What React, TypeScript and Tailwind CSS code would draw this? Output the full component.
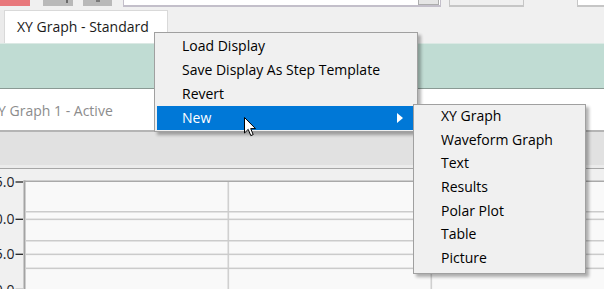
const mainItems = ["Load Display", "Save Display As Step Template", "Revert"];
const subItems = ["XY Graph", "Waveform Graph", "Text", "Results", "Polar Plot", "Table", "Picture"];

const Toolbar = () => (
  <div className="flex h-[7px]">
    <div className="h-[6px] w-[30px] bg-[#e8787c]" />
    <div className="ml-[13px] flex h-[6px] w-[30px] justify-end bg-[#b9b9b9] pr-[5px]">
      <div className="h-[3px] w-[2px] bg-[#6b6b6b]" />
    </div>
    <div className="ml-[10px] flex h-[6px] w-[29px] bg-[#b9b9b9] pl-[13px]">
      <div className="h-[2px] w-[4px] bg-[#7a7a7a]" />
    </div>
    <div className="ml-[11px] flex h-[7px] w-[318px] justify-end border-x border-b-2 border-[#c3bfca] bg-white pr-px">
      <div className="h-[5px] w-[21px] border-x border-b border-[#adadad] bg-[#e5e5e5]" />
    </div>
    <div className="ml-[8px] h-[7px] w-[75px] border-x border-b-2 border-[#c6c6c6] bg-[#f0f0f0]" />
    <div className="ml-[53px] h-[7px] flex-1 border-l border-b-2 border-[#c6c6c6] bg-white" />
  </div>
);

const Plot = () => (
  <svg width="604" height="120" className="block">
    <rect x="25" y="12" width="579" height="108" fill="#f9f9f9" />
    <rect x="23.5" y="11.5" width="2" height="109" fill="#a3a3a3" />
    <rect x="23.5" y="11.5" width="581" height="1.5" fill="#a9a9a9" />
    {[227.5, 430.5].map((x) => (
      <rect key={x} x={x} y="13" width="1.6" height="107" fill="#d0d0d0" />
    ))}
    {[42.7, 50.3, 71.7, 85.3, 99.3].map((y) => (
      <rect key={y} x="25.5" y={y - 0.7} width="579" height="1.5" fill="#cbcbcb" />
    ))}
    {[
      [13, "15.0"],
      [50.3, "10.0"],
      [85.3, "5.0"],
      [120.5, "0.0"],
    ].map(([y, t]) => (
      <g key={t as string}>
        <line x1="15.5" x2="23" y1={y as number} y2={y as number} stroke="#222" strokeWidth="1.3" />
        <text
          x="14.5"
          y={(y as number) + 5}
          textAnchor="end"
          fontSize="14"
          fill="#1e1e2a"
          fontFamily="'Open Sans', sans-serif"
        >
          {t}
        </text>
      </g>
    ))}
  </svg>
);

export default function App() {
  return (
    <div className="relative h-[289px] w-[604px] overflow-hidden bg-[#f0f0f0] font-['Open_Sans',sans-serif] text-[14px] text-black">
      <Toolbar />
      <div className="flex h-[36px] items-end">
        <div className="h-[33px] w-[5px] border-r border-[#d9d9d9] bg-[#ebebeb]" />
        <div className="flex h-[33px] w-[163px] items-center border-r border-t border-[#d9d9d9] bg-white pb-[2px] pl-[12px] text-[#1a1a1a]">
          XY Graph - Standard
        </div>
      </div>
      <div className="h-[46px] border-t border-b border-t-[#dbe9e4] border-b-[#8a9a94] bg-[#c0dcd3]" />
      <div className="flex h-[41px] items-center bg-white pt-px">
        <span className="ml-[-10px] text-[#8c8c8c]">XY Graph 1 - Active</span>
      </div>
      <div className="h-[35px] border-t-2 border-[#b4b4b4] bg-[#e1e1e1]" />
      <div className="h-[4px] border-b border-[#a6a6a6] bg-[#ebebeb]" />
      <Plot />

      {/* context menu */}
      <div className="absolute left-[154px] top-[32px] w-[264px] border border-[#a0a0a0] bg-[#f0f0f0] px-[2px] py-px shadow-[3px_3px_3px_rgba(0,0,0,0.3)]">
        {mainItems.map((t) => (
          <div key={t} className="flex h-[24px] items-center pb-px pl-[25px]">
            {t}
          </div>
        ))}
        <div className="flex h-[24px] items-center justify-between bg-[#0078d7] pb-px pl-[25px] pr-[12px] text-white">
          <span>New</span>
          <svg width="6" height="10" viewBox="0 0 6 10">
            <polygon points="0,0 6,5 0,10" fill="#fff" />
          </svg>
        </div>
      </div>

      {/* submenu */}
      <div className="absolute left-[413px] top-[104px] w-[173px] border border-[#a0a0a0] bg-[#f0f0f0] px-[2px] pb-[3px] shadow-[3px_3px_3px_rgba(0,0,0,0.3)]">
        {subItems.map((t) => (
          <div key={t} className="flex h-[23.6px] items-center pb-[2px] pl-[25px]">
            {t}
          </div>
        ))}
      </div>

      {/* mouse cursor */}
      <svg className="absolute left-[244px] top-[117px]" width="13" height="20" viewBox="0 0 13 20">
        <path
          d="M0.5 0.5 L0.5 16 L4.2 12.4 L6.8 18.6 L9.2 17.6 L6.7 11.6 L11.5 11.6 Z"
          fill="#fff"
          stroke="#000"
          strokeWidth="1"
          strokeLinejoin="miter"
        />
      </svg>
    </div>
  );
}
